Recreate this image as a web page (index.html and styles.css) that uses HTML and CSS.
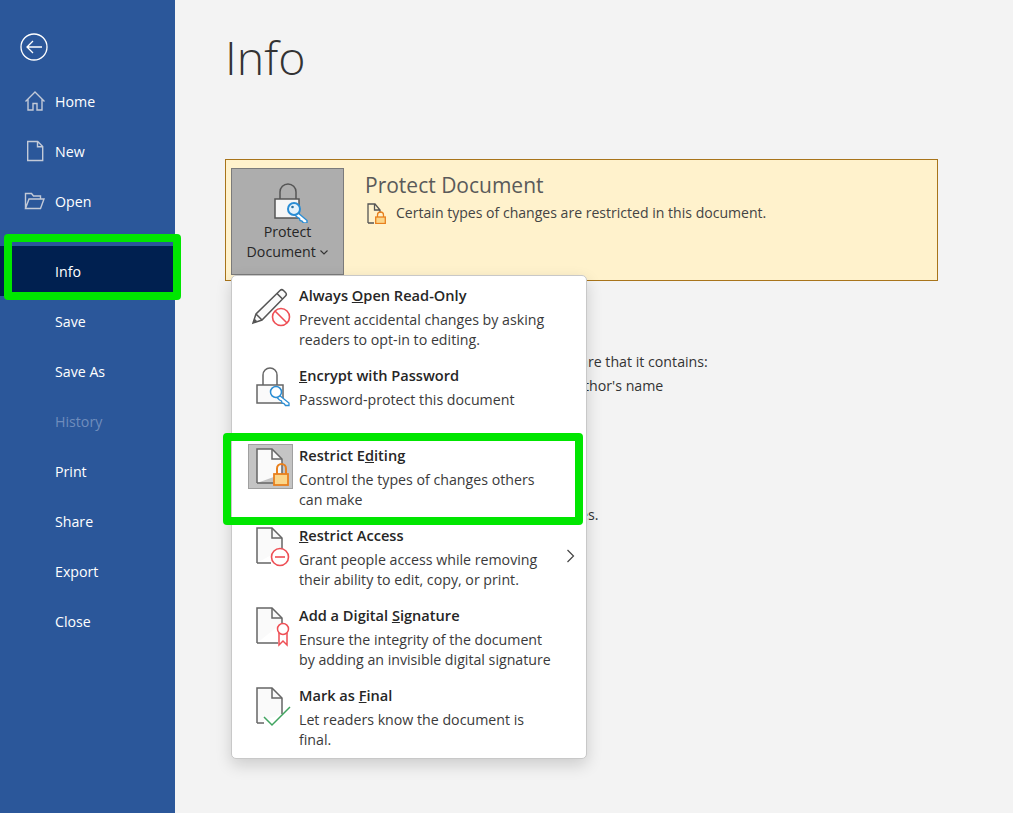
FILE: index.html
```html
<!DOCTYPE html>
<html lang="en">
<head>
<meta charset="utf-8">
<title>Info</title>
<link rel="stylesheet" href="styles.css">
</head>
<body>
<div class="app">
  <nav class="sidebar">
    <div class="back">
      <svg width="28" height="28" viewBox="0 0 28 28" fill="none" stroke="#fff" stroke-width="1.3"><circle cx="14" cy="14" r="13"/><path d="M22 14H7M13 8l-6 6 6 6"/></svg>
    </div>
    <a class="nav-item"><svg class="nav-ico" width="22" height="22" viewBox="0 0 22 22" fill="none" stroke="#c3cad8" stroke-width="1.4"><path d="M1.5 11.5 11 2l9.5 9.5M4 9.5V20h5v-6.5h4V20h5V9.5"/></svg><span class="nav-label">Home</span></a>
    <a class="nav-item"><svg class="nav-ico" width="22" height="22" viewBox="0 0 22 22" fill="none" stroke="#c3cad8" stroke-width="1.4"><path d="M3.7 1.5h10l5 5v14h-15zM13.500 1.500v5.200h5.200"/></svg><span class="nav-label">New</span></a>
    <a class="nav-item"><svg class="nav-ico" width="22" height="22" viewBox="0 0 22 22" fill="none" stroke="#c3cad8" stroke-width="1.4"><path d="M1.500 18.500V3.500h6l2 2.500h7v3M1.500 18.500l3.500-9.500h15l-3.500 9.500z"/></svg><span class="nav-label">Open</span></a>
    <a class="nav-item nav-active"><span class="nav-label">Info</span></a>
    <a class="nav-item"><span class="nav-label">Save</span></a>
    <a class="nav-item"><span class="nav-label">Save As</span></a>
    <a class="nav-item nav-disabled"><span class="nav-label">History</span></a>
    <a class="nav-item"><span class="nav-label">Print</span></a>
    <a class="nav-item"><span class="nav-label">Share</span></a>
    <a class="nav-item"><span class="nav-label">Export</span></a>
    <a class="nav-item"><span class="nav-label">Close</span></a>
  </nav>

  <main class="main">
    <h1 class="title">Info</h1>
    <section class="panel">
      <button class="protect-btn">
        <svg class="protect-ico" width="44" height="40" viewBox="0 0 44 40" fill="none"><path d="M15 16V9a8 8 0 0 1 16 0v7" stroke="#555" stroke-width="1.500"/><rect x="10" y="16" width="24" height="19" fill="#f6f6f6" stroke="#555" stroke-width="1.500"/><path d="M32 29l10 8.500v2.500h-3.500l-1.500-2-2-.5-.5-2-2-1-3.500-3.500z" fill="#fff" stroke="#2a8dd4" stroke-width="1.400"/><circle cx="29" cy="26" r="6" fill="#e4f2fb" stroke="#2a8dd4" stroke-width="2"/><circle cx="27.500" cy="24" r="1.300" fill="#2a6f9f"/></svg>
        <span class="protect-label">Protect<br>Document <svg class="caret" width="8" height="5" viewBox="0 0 8 5" fill="none" stroke="#333" stroke-width="1.100"><path d="M.5.5 4 4 7.500.5"/></svg></span>
      </button>
      <div class="panel-body">
        <h2 class="panel-title">Protect Document</h2>
        <div class="panel-note">
          <svg width="22" height="22" viewBox="0 0 22 22" fill="none"><path d="M2 21V2h7l5 6v3M2 21h6M8.500 2v6H14" stroke="#555" stroke-width="1.300"/><path d="M11.500 15v-2a3 3 0 0 1 6 0v2" stroke="#e8801e" stroke-width="1.300"/><rect x="9.700" y="15" width="9.600" height="6.500" fill="#fbd68a" stroke="#e8801e" stroke-width="1.300"/></svg>
          <span>Certain types of changes are restricted in this document.</span>
        </div>
      </div>
    </section>
    <section class="inspect">
      <p class="inspect-line">are that it contains:</p>
      <p class="inspect-line inspect-sub">thor's name</p>
      <p class="inspect-line inspect-last">es.</p>
    </section>
  </main>
</div>

<div class="menu">
  <div class="menu-item">
    <div class="menu-ico"><svg width="45" height="45" viewBox="0 0 45 45" fill="none"><path d="M5 39 8 30 32 6.500a2.500 2.500 0 0 1 3.500 0l2 2a2.500 2.500 0 0 1 0 3.500L14 36zM8 30l6 6M29 9.500l6 6" fill="#fafafa" stroke="#555" stroke-width="1.500"/><path d="M5 39l1.500-4.500 3 3z" fill="#555"/><circle cx="33" cy="33" r="8.500" fill="#fff" stroke="#ee4f55" stroke-width="1.600"/><path d="M27 27l12 12" stroke="#ee4f55" stroke-width="1.600"/></svg></div>
    <div class="menu-text"><div class="menu-title">Always <u>O</u>pen Read-Only</div><div class="menu-desc">Prevent accidental changes by asking<br>readers to opt-in to editing.</div></div>
  </div>
  <div class="menu-item">
    <div class="menu-ico"><svg width="45" height="45" viewBox="0 0 45 45" fill="none"><path d="M15 21v-10a7 7 0 0 1 14 0v10" stroke="#666" stroke-width="1.500"/><rect x="9" y="21" width="26" height="18" fill="#fafafa" stroke="#666" stroke-width="1.500"/><path d="M31 31l10 8v2.500h-3.500l-1.500-2-2-.5-.5-2-2-1-3-3z" fill="#fff" stroke="#2a8dd4" stroke-width="1.300"/><circle cx="28" cy="28" r="5.500" fill="#fff" stroke="#2a8dd4" stroke-width="1.500"/></svg></div>
    <div class="menu-text"><div class="menu-title"><u>E</u>ncrypt with Password</div><div class="menu-desc">Password-protect this document</div></div>
  </div>
  <div class="menu-item">
    <div class="menu-ico menu-ico-active"><svg width="43" height="43" viewBox="1 1 43 43" fill="none"><path d="M9 39V5h15l10 10v15M9 39h16" fill="#fafafa" stroke="#666" stroke-width="1.500"/><path d="M24 5v10h10" stroke="#666" stroke-width="1.500"/><path d="M29 30v-5.500a4.500 4.500 0 0 1 9 0V30" stroke="#e8801e" stroke-width="2"/><rect x="26" y="30" width="14" height="11" fill="#fbd68a" stroke="#e8801e" stroke-width="1.800"/></svg></div>
    <div class="menu-text"><div class="menu-title">Restrict E<u>d</u>iting</div><div class="menu-desc">Control the types of changes others<br>can make</div></div>
  </div>
  <div class="menu-item">
    <div class="menu-ico"><svg width="45" height="45" viewBox="0 0 45 45" fill="none"><path d="M9 39V4h15l10 10v11M9 39h14" fill="#fafafa" stroke="#666" stroke-width="1.500"/><path d="M24 4v10h10" stroke="#666" stroke-width="1.500"/><circle cx="32" cy="33" r="8.500" fill="#fff" stroke="#ee4f55" stroke-width="1.600"/><path d="M27 33h10" stroke="#ee4f55" stroke-width="1.600"/></svg></div>
    <div class="menu-text"><div class="menu-title"><u>R</u>estrict Access</div><div class="menu-desc">Grant people access while removing<br>their ability to edit, copy, or print.</div></div>
    <svg class="menu-arrow" width="9" height="14" viewBox="0 0 9 14" fill="none" stroke="#444" stroke-width="1.200"><path d="M1.500 1l6 6-6 6"/></svg>
  </div>
  <div class="menu-item">
    <div class="menu-ico"><svg width="45" height="45" viewBox="0 0 45 45" fill="none"><path d="M9 39V4h15l10 10v5M9 39h21" fill="#fafafa" stroke="#666" stroke-width="1.500"/><path d="M24 4v10h10" stroke="#666" stroke-width="1.500"/><path d="M31 29v12l4-4 4 4V29" fill="#fff" stroke="#ee4f55" stroke-width="1.500"/><circle cx="35" cy="25" r="5.500" fill="#fff" stroke="#ee4f55" stroke-width="1.500"/></svg></div>
    <div class="menu-text"><div class="menu-title">Add a Digital <u>S</u>ignature</div><div class="menu-desc">Ensure the integrity of the document<br>by adding an invisible digital signature</div></div>
  </div>
  <div class="menu-item">
    <div class="menu-ico"><svg width="45" height="45" viewBox="0 0 45 45" fill="none"><path d="M9 39V4h15l10 10v16M9 39h7" fill="#fafafa" stroke="#666" stroke-width="1.500"/><path d="M24 4v10h10" stroke="#666" stroke-width="1.500"/><path d="M16 33l8 8 18-18" stroke="#3fa45f" stroke-width="1.500"/></svg></div>
    <div class="menu-text"><div class="menu-title">Mark as <u>F</u>inal</div><div class="menu-desc">Let readers know the document is<br>final.</div></div>
  </div>
</div>

<div class="callout callout-nav"></div>
<div class="callout callout-menu"></div>
</body>
</html>
```

FILE: styles.css
```css
* { box-sizing: border-box; }
html, body { margin: 0; height: 100%; }
body {
  position: relative;
  height: 813px;
  overflow: hidden;
  background: #f3f3f3;
  font-family: "Open Sans", "Noto Sans", sans-serif;
  font-size: 14.2px;
  line-height: 20px;
  color: #333;
}
.app { display: flex; height: 813px; }

.sidebar { width: 175px; flex: none; background: #2b579a; color: #fff; }
.back { height: 76px; padding: 33px 0 0 20px; }
.back svg { display: block; }
.nav-item {
  display: grid;
  grid-template-columns: 31px 1fr;
  align-items: center;
  height: 50px;
  padding-left: 24px;
  color: #fff;
}
.nav-label { grid-column: 2; padding-top: 2px; }
.nav-ico { display: block; }
.nav-active { background: #002050; margin-top: 20px; }
.nav-disabled { color: #6f8dbd; }

.main { flex: 1; padding-left: 50px; }
.title {
  margin: 0;
  height: 159px;
  padding-top: 24px;
  font-size: 46.5px;
  line-height: 66px;
  font-weight: 300;
  color: #333;
}
.panel {
  display: flex;
  width: 713px;
  height: 122px;
  padding: 8px 0 0 5px;
  background: #fff2cc;
  border: 1px solid #a8741a;
}
.protect-btn {
  display: flex;
  flex-direction: column;
  align-items: center;
  width: 113px;
  height: 107px;
  padding: 14px 0 0;
  background: #adadad;
  border: 1px solid #7b7b7b;
  font: inherit;
  color: #262626;
}
.protect-ico { display: block; margin-left: -2px; }
.protect-label { display: block; margin-top: -1px; text-align: center; }
.caret { vertical-align: 2px; margin-left: 1px; }
.panel-body { padding: 1px 0 0 21px; }
.panel-title {
  margin: 0;
  font-size: 21px;
  line-height: 32px;
  font-weight: 400;
  color: #5a5a5a;
}
.panel-note { display: flex; align-items: center; gap: 8px; margin-top: 1px; font-size: 14.07px; color: #444; }
.panel-note svg { display: block; flex: none; margin-left: 1px; }

.inspect { padding: 71px 0 0 355px; }
.inspect-line { margin: 0; }
.inspect-sub { margin-top: 4px; padding-left: 4px; }
.inspect-last { margin-top: 109px; }

.menu {
  position: absolute;
  left: 231px;
  top: 275px;
  width: 356px;
  height: 484px;
  background: #fff;
  border: 1px solid #c8c8c8;
  border-radius: 5px;
  box-shadow: 0 6px 16px rgba(0, 0, 0, .16);
}
.menu-item { display: flex; height: 80px; padding: 8px 0 0 16px; position: relative; }
.menu-ico { width: 45px; height: 45px; flex: none; margin-right: 6px; }
.menu-ico svg { display: block; }
.menu-ico-active { background: #c4c4c4; border: 1px solid #a0a0a0; }
.menu-text { padding-top: 1px; }
.menu-title { font-size: 14.6px; font-weight: 600; color: #262626; }
.menu-desc { margin-top: 5px; color: #3a3a3a; white-space: nowrap; }
.menu-arrow { position: absolute; left: 334px; top: 33px; }

.callout { position: absolute; border: 8px solid #00e600; border-radius: 4px; }
.callout-nav { left: 4px; top: 234px; width: 177px; height: 66px; }
.callout-menu { left: 223px; top: 433px; width: 360px; height: 92px; }
```
